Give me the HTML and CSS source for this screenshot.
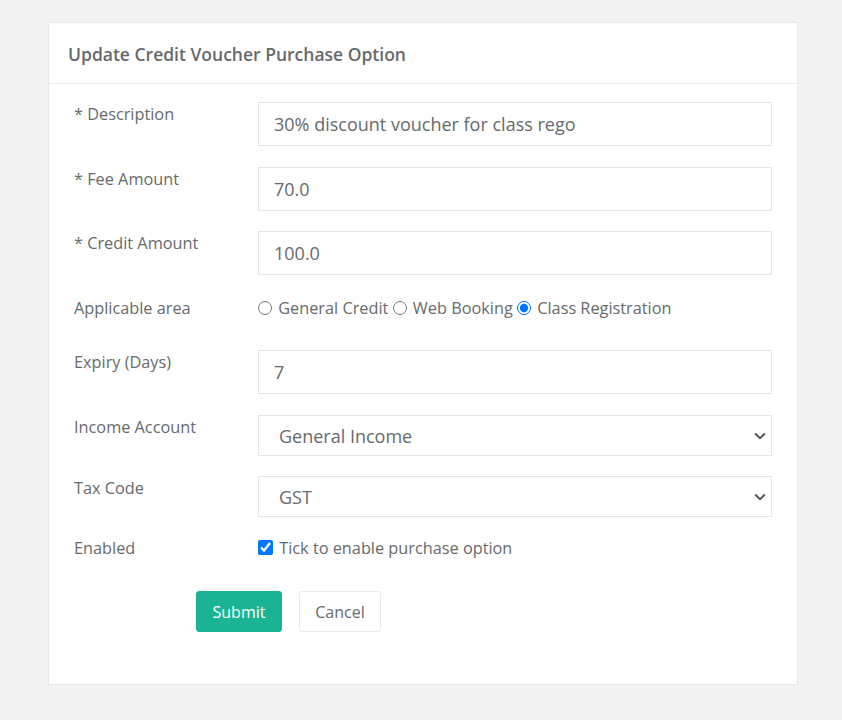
FILE: index.html
```html
<!DOCTYPE html>
<html>
<head>
<meta charset="utf-8">
<link rel="stylesheet" href="styles.css">
</head>
<body>
<div class="page">
  <div class="card">
    <div class="card-header">Update Credit Voucher Purchase Option</div>
    <form class="card-body">
      <div class="row">
        <label class="lbl">* Description</label>
        <input class="ctl" type="text" value="30% discount voucher for class rego">
      </div>
      <div class="row row-tight">
        <label class="lbl">* Fee Amount</label>
        <input class="ctl" type="text" value="70.0">
      </div>
      <div class="row">
        <label class="lbl">* Credit Amount</label>
        <input class="ctl" type="text" value="100.0">
      </div>
      <div class="row row-inline">
        <label class="lbl">Applicable area</label>
        <div class="opts">
          <label class="opt"><input type="radio" name="area"> General Credit</label>
          <label class="opt"><input type="radio" name="area"> Web Booking</label>
          <label class="opt"><input type="radio" name="area" checked> Class Registration</label>
        </div>
      </div>
      <div class="row">
        <label class="lbl">Expiry (Days)</label>
        <input class="ctl" type="text" value="7">
      </div>
      <div class="row row-tight">
        <label class="lbl">Income Account</label>
        <select class="ctl sel"><option>General Income</option></select>
      </div>
      <div class="row row-last">
        <label class="lbl">Tax Code</label>
        <select class="ctl sel"><option>GST</option></select>
      </div>
      <div class="row row-inline">
        <label class="lbl">Enabled</label>
        <div class="opts">
          <label class="opt"><input type="checkbox" checked> Tick to enable purchase option</label>
        </div>
      </div>
      <div class="actions">
        <button type="button" class="btn btn-primary">Submit</button>
        <button type="button" class="btn btn-default">Cancel</button>
      </div>
    </form>
  </div>
</div>
</body>
</html>
```

FILE: styles.css
```css
html, body {
  margin: 0;
  padding: 0;
  background: #f3f3f4;
  font-family: "Open Sans", "Noto Sans", sans-serif;
  color: #676a6c;
}
.page {
  padding: 22px 44px 36px 48px;
}
.card {
  width: 750px;
  box-sizing: border-box;
  background: #fff;
  border: 1px solid #e7eaec;
  min-height: 663px;
}
.card-header {
  height: 61px;
  box-sizing: border-box;
  padding: 19px 19px 0 19px;
  font-size: 17.5px;
  font-weight: 600;
  border-bottom: 1px solid #e7eaec;
  line-height: 24px;
}
.card-body {
  display: flex;
  flex-direction: column;
  padding: 18px 25px 25px 25px;
  margin: 0;
}
.row {
  display: grid;
  grid-template-columns: 184px 1fr;
  margin-bottom: 21px;
  align-items: start;
}
.row-tight {
  margin-bottom: 20px;
}
.row-last {
  margin-bottom: 19px;
}
.lbl {
  font-size: 16.3px;
  line-height: 22px;
  padding-top: 1px;
}
.ctl {
  height: 44px;
  box-sizing: border-box;
  border: 1px solid #e5e6e7;
  border-radius: 0;
  padding: 0 15px;
  font-family: "Open Sans", "Noto Sans", sans-serif;
  font-size: 18px;
  color: #676a6c;
  background: #fff;
  outline: none;
}
.sel {
  height: 41px;
  padding: 0 14px 0 20px;
  appearance: none;
  -webkit-appearance: none;
  background-image: url("data:image/svg+xml,%3Csvg xmlns='http://www.w3.org/2000/svg' width='12' height='8' viewBox='0 0 12 8'%3E%3Cpath d='M1.2 1.5 L6 6.2 L10.8 1.5' fill='none' stroke='%23555' stroke-width='2'/%3E%3C/svg%3E");
  background-repeat: no-repeat;
  background-position: right 5px center;
  background-size: 12px 8px;
}
.row-inline {
  margin-bottom: 31px;
}
.opts {
  font-size: 16.3px;
  line-height: 22px;
  padding-top: 1px;
}
.opt input {
  margin: 0 2px 0 0;
  vertical-align: -1px;
  width: 14px;
  height: 14px;
}
.opt input[type="checkbox"] {
  width: 15px;
  height: 15px;
  accent-color: #0075ff;
}
.actions {
  display: flex;
  gap: 17px;
  padding-left: 122px;
  margin-top: 1px;
}
.btn {
  height: 41px;
  font-family: "Open Sans", "Noto Sans", sans-serif;
  font-size: 16px;
  border-radius: 3px;
  padding: 0 15px;
  cursor: pointer;
}
.btn-primary {
  background: #1ab394;
  border: 1px solid #1ab394;
  color: #fff;
  width: 86px;
}
.btn-default {
  background: #fff;
  border: 1px solid #e7eaec;
  color: #676a6c;
  width: 82px;
}
```
